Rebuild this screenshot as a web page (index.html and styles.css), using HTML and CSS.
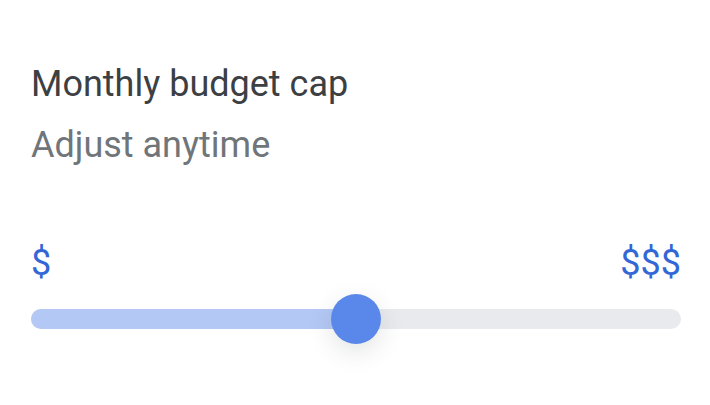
FILE: index.html
```html
<!DOCTYPE html>
<html lang="en">
<head>
    <meta charset="utf-8">
    <title>Monthly budget cap</title>
    <meta name="viewport" content="width=device-width, initial-scale=1">
    <link rel="stylesheet" href="styles.css">
</head>
<body>
    <div class="budget">
        <h1 class="budget-title">Monthly budget cap</h1>
        <p class="budget-subtitle">Adjust anytime</p>
        <div class="scale-labels">
            <span>$</span>
            <span>$$$</span>
        </div>
        <div class="slider">
            <div class="slider-fill" style="width: 50%;"></div>
            <div class="slider-thumb" style="left: 50%;"></div>
        </div>
    </div>
</body>
</html>
```

FILE: styles.css
```css
body {
    margin: 0;
    padding: 0;
    min-height: 405px;
    background: #ffffff;
    font-family: Roboto, "Liberation Sans", Arial, sans-serif;
}

.budget {
    width: 650px;
    padding: 63px 31px 60px 31px;
}

.budget-title {
    margin: 0;
    font-size: 36px;
    line-height: 42px;
    font-weight: 400;
    color: #3c4043;
}

.budget-subtitle {
    margin: 19px 0 0 0;
    font-size: 36px;
    line-height: 42px;
    color: #70757a;
}

.scale-labels {
    display: flex;
    justify-content: space-between;
    margin-top: 76px;
    font-size: 36px;
    line-height: 42px;
    color: #3367d6;
}

.slider {
    position: relative;
    height: 20px;
    margin-top: 25px;
    border-radius: 10px;
    background: #e8eaed;
}

.slider-fill {
    height: 100%;
    border-radius: 10px 0 0 10px;
    background: #b3c8f4;
}

.slider-thumb {
    position: absolute;
    top: 50%;
    width: 50px;
    height: 50px;
    margin: -25px 0 0 -25px;
    border-radius: 50%;
    background: #5a88ea;
    box-shadow: 0 8px 24px rgba(60, 64, 67, 0.14);
}
```
